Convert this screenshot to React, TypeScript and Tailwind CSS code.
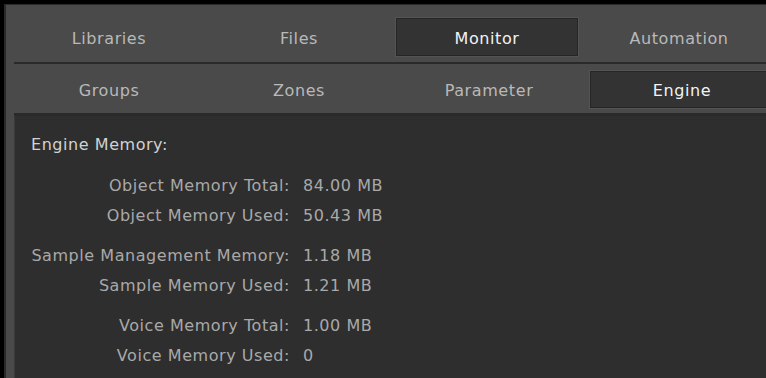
import React from 'react';

const font = { fontFamily: '"DejaVu Sans", "Liberation Sans", sans-serif' };

const topTabs = ['Libraries', 'Files', 'Monitor', 'Automation'];
const subTabs = ['Groups', 'Zones', 'Parameter', 'Engine'];

const rows: { label: string; value: string; gap?: boolean }[] = [
  { label: 'Object Memory Total:', value: '84.00 MB' },
  { label: 'Object Memory Used:', value: '50.43 MB' },
  { label: 'Sample Management Memory:', value: '1.18 MB', gap: true },
  { label: 'Sample Memory Used:', value: '1.21 MB' },
  { label: 'Voice Memory Total:', value: '1.00 MB', gap: true },
  { label: 'Voice Memory Used:', value: '0' },
];

const Tab: React.FC<{ label: string; active: boolean; className?: string }> = ({ label, active, className }) => (
  <div
    className={`flex items-center justify-center whitespace-nowrap text-[16px] tracking-[0.6px] ${
      active
        ? 'bg-[#333333] border border-[#262626] shadow-[0_0_0_1px_#545454] text-[#f2f2f2]'
        : 'text-[#b9b9b9]'
    } ${className ?? ''}`}
  >
    {label}
  </div>
);

export default function App() {
  return (
    <div className="w-[766px] h-[378px] bg-black overflow-hidden pt-[4px] pl-[4px]" style={font}>
      <div className="h-full bg-[#2a2a2a] pt-px pl-[2px]">
        <div className="h-full bg-[#4a4a4a] pl-[8px] flex flex-col overflow-hidden">
          <div className="grid grid-cols-[190px_190px_190px_190px] w-[760px] pt-[13px] pb-[6px] shrink-0">
            {topTabs.map((t) => (
              <Tab
                key={t}
                label={t}
                active={t === 'Monitor'}
                className={t === 'Monitor' ? 'h-[38px] ml-[2px] mr-[6px] pt-[3px]' : 'h-[38px] pt-[3px]'}
              />
            ))}
          </div>
          <div className="h-[2px] bg-[#2a2a2a] shrink-0" />
          <div className="grid grid-cols-[190px_190px_190px_190px] w-[760px] pt-[7px] pb-[5px] shrink-0">
            {subTabs.map((t) => (
              <Tab
                key={t}
                label={t}
                active={t === 'Engine'}
                className={t === 'Engine' ? 'h-[37px] ml-[6px] pt-[2px]' : 'h-[37px] pt-[2px]'}
              />
            ))}
          </div>
          <div className="h-[3px] bg-[#2a2a2a] shrink-0" />
          <div className="flex-1 bg-[#2e2e2e] border-l border-[#3a3a3a] pl-[16px] pt-[18px] text-[16px] tracking-[0.55px] whitespace-nowrap">
            <div className="text-[#d2d2d2] h-[22px] leading-[22px]">Engine Memory:</div>
            <div className="pt-[15px]">
              {rows.map((r) => (
                <div key={r.label} className={`flex h-[30px] items-center ${r.gap ? 'mt-[10px]' : ''}`}>
                  <div className="w-[259px] shrink-0 flex justify-end text-[#a9a9a9]">{r.label}</div>
                  <div className="pl-[13px] text-[#a9a9a9]">{r.value}</div>
                </div>
              ))}
            </div>
          </div>
        </div>
      </div>
    </div>
  );
}
